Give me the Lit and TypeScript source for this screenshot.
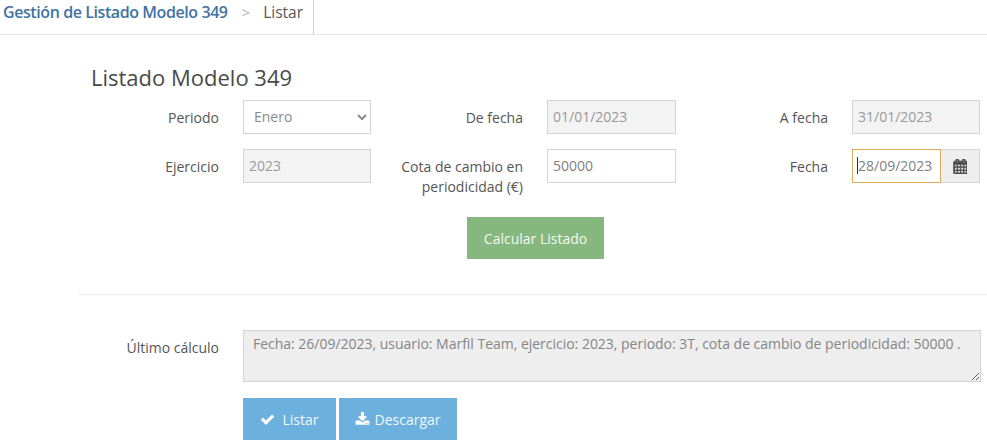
import { LitElement, html, css } from 'lit';
import { customElement } from 'lit/decorators.js';

const CALENDAR = 'M192 1664h288v-288h-288v288zm352 0h320v-288h-320v288zm-352-352h288v-320h-288v320zm352 0h320v-320h-320v320zm-352-384h288v-288h-288v288zm736 736h320v-288h-320v288zm-384-736h320v-288h-320v288zm768 736h288v-288h-288v288zm-384-352h320v-320h-320v320zm-352-864v-288q0-13-9.5-22.5t-22.5-9.5h-64q-13 0-22.5 9.5t-9.5 22.5v288q0 13 9.5 22.5t22.5 9.5h64q13 0 22.5-9.5t9.5-22.5zm736 864h288v-320h-288v320zm-384-384h320v-288h-320v288zm384 0h288v-288h-288v288zm32-480v-288q0-13-9.5-22.5t-22.5-9.5h-64q-13 0-22.5 9.5t-9.5 22.5v288q0 13 9.5 22.5t22.5 9.5h64q13 0 22.5-9.5t9.5-22.5zm384-64v1280q0 52-38 90t-90 38h-1408q-52 0-90-38t-38-90v-1280q0-52 38-90t90-38h128v-96q0-66 47-113t113-47h64q66 0 113 47t47 113v96h384v-96q0-66 47-113t113-47h64q66 0 113 47t47 113v96h128q52 0 90 38t38 90z';
const CHECK = 'M1671 566q0 40-28 68l-724 724-136 136q-28 28-68 28t-68-28l-136-136-362-362q-28-28-28-68t28-68l136-136q28-28 68-28t68 28l294 295 656-657q28-28 68-28t68 28l136 136q28 28 28 68z';
const DOWNLOAD = 'M1344 1344q0-26-19-45t-45-19-45 19-19 45 19 45 45 19 45-19 19-45zm256 0q0-26-19-45t-45-19-45 19-19 45 19 45 45 19 45-19 19-45zm128-224v320q0 40-28 68t-68 28h-1472q-40 0-68-28t-28-68v-320q0-40 28-68t68-28h465l135 136q58 56 136 56t136-56l136-136h464q40 0 68 28t28 68zm-325-569q17 41-14 70l-448 448q-18 19-45 19t-45-19l-448-448q-31-29-14-70 17-39 59-39h256v-448q0-26 19-45t45-19h256q26 0 45 19t19 45v448h256q42 0 59 39z';

@customElement('app-root')
export class AppRoot extends LitElement {
  static styles = css`
    :host {
      display: block;
      height: 447px;
      overflow: hidden;
      background: #fff;
      font-family: 'Open Sans', sans-serif;
      font-size: 14px;
      color: #555;
    }

    * {
      box-sizing: border-box;
    }

    .breadcrumb {
      display: flex;
      height: 35px;
      border-bottom: 1px solid #e6e6e6;
      line-height: 24px;
    }

    .crumbs {
      display: flex;
      width: 314px;
      padding-left: 3px;
      border-right: 1px solid #d0d0d0;
    }

    .crumb-link {
      color: #3f73a3;
      font-size: 16px;
      font-weight: 600;
      letter-spacing: -0.42px;
    }

    .crumb-sep {
      margin: 0 13px 0 14px;
      font-size: 15px;
      color: #b5b5b5;
    }

    .crumb-current {
      font-size: 15.5px;
      color: #555;
    }

    .content {
      margin-left: 78px;
    }

    h1 {
      margin: 0;
      padding: 28px 0 0 13px;
      height: 65px;
      font-size: 22px;
      font-weight: 400;
      line-height: 28px;
      color: #4a4a4a;
    }

    .grid {
      display: grid;
      grid-template-columns: 165px 128px 176px 129px 176px 128px;
      grid-auto-rows: 34px;
      row-gap: 15px;
    }

    label {
      padding: 8px 24px 0 0;
      text-align: right;
      line-height: 20px;
      white-space: nowrap;
    }

    input,
    select,
    textarea {
      font: inherit;
      border: 1px solid #d4d4d4;
      border-radius: 0;
      outline: none;
      background: #fff;
      color: #808080;
    }

    input {
      width: 100%;
      height: 34px;
      padding: 0 5px 2px;
    }

    input:disabled {
      background: #f3f3f3;
      color: #999;
    }

    select {
      width: 100%;
      height: 34px;
      padding: 0 2px 2px 6px;
      color: #8a8a8a;
    }

    .date-group {
      display: flex;
    }

    .date-field {
      position: relative;
      width: 89px;
    }

    .date-field input {
      border-color: #e0a95a;
    }

    .caret {
      position: absolute;
      left: 5px;
      top: 8px;
      width: 1px;
      height: 17px;
      background: #333;
    }

    .addon {
      display: flex;
      align-items: center;
      justify-content: center;
      width: 39px;
      height: 34px;
      border: 1px solid #d4d4d4;
      border-left: 0;
      background: #eee;
    }

    .addon svg {
      width: 14px;
      height: 15px;
      fill: #4a4a4a;
      stroke: #4a4a4a;
      stroke-width: 90;
    }

    .actions {
      display: flex;
      justify-content: flex-start;
      margin: 0 0 0 389px;
      padding-top: 34px;
    }

    button {
      display: flex;
      align-items: center;
      justify-content: center;
      height: 42px;
      border: 0;
      border-radius: 0;
      font: inherit;
      color: #f4f8f2;
    }

    .btn-green {
      width: 137px;
      background: #85b77e;
    }

    hr {
      margin: 35px 0 35px;
      border: 0;
      border-top: 1px solid #ececec;
    }

    .last {
      display: grid;
      grid-template-columns: 165px 738px;
    }

    .last label {
      padding-top: 8px;
    }

    textarea {
      display: block;
      width: 738px;
      height: 52px;
      padding: 3px 9px;
      background: #eee;
      color: #858585;
      resize: vertical;
      line-height: 20px;
      letter-spacing: -0.02px;
    }

    .bottom {
      display: flex;
      gap: 3px;
      margin: 16px 0 0 165px;
    }

    .btn-blue {
      gap: 4px;
      background: #6cb0de;
      color: #f2f7fb;
    }

    .btn-list {
      width: 93px;
      gap: 7px;
    }

    .btn-down {
      width: 118px;
    }

    .btn-blue svg {
      width: 15px;
      height: 15px;
      fill: #fff;
    }
  `;

  render() {
    return html`
      <div class="breadcrumb">
        <div class="crumbs">
          <span class="crumb-link">Gestión de Listado Modelo 349</span>
          <span class="crumb-sep">&gt;</span>
          <span class="crumb-current">Listar</span>
        </div>
      </div>
      <div class="content">
        <h1>Listado Modelo 349</h1>
        <div class="grid">
          <label>Periodo</label>
          <select><option>Enero</option></select>
          <label>De fecha</label>
          <input disabled value="01/01/2023" />
          <label>A fecha</label>
          <input disabled value="31/01/2023" />

          <label>Ejercicio</label>
          <input disabled value="2023" />
          <label>Cota de cambio en<br />periodicidad (€)</label>
          <input value="50000" />
          <label>Fecha</label>
          <div class="date-group">
            <div class="date-field">
              <input value="28/09/2023" />
              <span class="caret"></span>
            </div>
            <span class="addon">
              <svg viewBox="0 0 1664 1792"><path d=${CALENDAR}></path></svg>
            </span>
          </div>
        </div>
        <div class="actions">
          <button class="btn-green">Calcular Listado</button>
        </div>
        <hr />
        <div class="last">
          <label>Último cálculo</label>
          <textarea readonly>Fecha: 26/09/2023, usuario: Marfil Team, ejercicio: 2023, periodo: 3T, cota de cambio de periodicidad: 50000 .</textarea>
        </div>
        <div class="bottom">
          <button class="btn-blue btn-list">
            <svg viewBox="0 0 1792 1792"><path d=${CHECK}></path></svg>
            Listar
          </button>
          <button class="btn-blue btn-down">
            <svg viewBox="0 0 1792 1792"><path d=${DOWNLOAD}></path></svg>
            Descargar
          </button>
        </div>
      </div>
    `;
  }
}
